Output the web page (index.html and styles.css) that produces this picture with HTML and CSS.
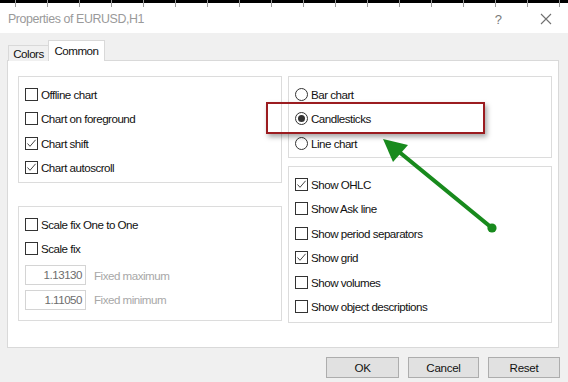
FILE: index.html
```html
<!DOCTYPE html>
<html>
<head>
<meta charset="utf-8">
<title>Properties of EURUSD,H1</title>
<link rel="stylesheet" href="styles.css">
</head>
<body>
<div class="window">
  <div class="topbar"></div>
  <div class="titlebar">
    <span class="title">Properties of EURUSD,H1</span>
    <div class="controls">
      <span class="help">?</span>
      <svg class="close" width="12" height="12" viewBox="0 0 12 12"><path d="M1 1L11 11M11 1L1 11" stroke="#707070" stroke-width="1.1" fill="none"/></svg>
    </div>
  </div>
  <div class="client">
    <div class="tabs">
      <div class="tab">Colors</div>
      <div class="tab active">Common</div>
    </div>
    <div class="panel">
      <div class="col">
        <div class="group g-left1">
          <div class="row"><span class="cb"></span><span>Offline chart</span></div>
          <div class="row"><span class="cb"></span><span>Chart on foreground</span></div>
          <div class="row"><span class="cb checked"><svg viewBox="0 0 11 11"><path d="M1.5 5.5L4 8.3L9.6 1.8" fill="none" stroke="#444" stroke-width="1"/></svg></span><span>Chart shift</span></div>
          <div class="row"><span class="cb checked"><svg viewBox="0 0 11 11"><path d="M1.5 5.5L4 8.3L9.6 1.8" fill="none" stroke="#444" stroke-width="1"/></svg></span><span>Chart autoscroll</span></div>
        </div>
        <div class="group g-left2">
          <div class="row"><span class="cb"></span><span>Scale fix One to One</span></div>
          <div class="row"><span class="cb"></span><span>Scale fix</span></div>
          <div class="row field-row first"><span class="field">1.13130</span><span class="field-label">Fixed maximum</span></div>
          <div class="row field-row"><span class="field">1.11050</span><span class="field-label">Fixed minimum</span></div>
        </div>
      </div>
      <div class="col">
        <div class="group g-right1">
          <div class="row"><span class="rb"></span><span>Bar chart</span></div>
          <div class="row"><span class="rb on"></span><span>Candlesticks</span></div>
          <div class="row"><span class="rb"></span><span>Line chart</span></div>
        </div>
        <div class="group g-right2">
          <div class="row"><span class="cb checked"><svg viewBox="0 0 11 11"><path d="M1.5 5.5L4 8.3L9.6 1.8" fill="none" stroke="#444" stroke-width="1"/></svg></span><span>Show OHLC</span></div>
          <div class="row"><span class="cb"></span><span>Show Ask line</span></div>
          <div class="row"><span class="cb"></span><span>Show period separators</span></div>
          <div class="row"><span class="cb checked"><svg viewBox="0 0 11 11"><path d="M1.5 5.5L4 8.3L9.6 1.8" fill="none" stroke="#444" stroke-width="1"/></svg></span><span>Show grid</span></div>
          <div class="row"><span class="cb"></span><span>Show volumes</span></div>
          <div class="row"><span class="cb"></span><span>Show object descriptions</span></div>
        </div>
      </div>
    </div>
    <div class="buttons">
      <button class="btn btn-ok">OK</button>
      <button class="btn btn-cancel">Cancel</button>
      <button class="btn btn-reset">Reset</button>
    </div>
  </div>
  <div class="highlight"></div>
  <svg class="arrow" width="568" height="382" viewBox="0 0 568 382">
    <line x1="492" y1="228" x2="398" y2="151" stroke="#188a1d" stroke-width="4.2" stroke-linecap="round"/>
    <polygon points="383,139 408,145 393,162" fill="#188a1d"/>
    <circle cx="492" cy="228" r="4.6" fill="#188a1d"/>
  </svg>
</div>
</body>
</html>
```

FILE: styles.css
```css
* { box-sizing: border-box; }

body {
  margin: 0;
  font-family: "Liberation Sans", Arial, sans-serif;
  font-size: 11.6px;
  color: #111;
}

.window {
  position: relative;
  width: 568px;
  height: 382px;
  overflow: hidden;
  background: #f0f0f0;
}

.topbar {
  position: relative;
  height: 3px;
  background: #000;
}

.topbar::after {
  content: "";
  position: absolute;
  left: 0;
  right: 0;
  top: 0;
  height: 7px;
  background: repeating-linear-gradient(to right, transparent 0 15px, #9a9a9a 15px 16px, transparent 16px 32px);
}

.titlebar {
  height: 30px;
  background: #fff;
  display: flex;
  align-items: center;
  padding-left: 8px;
}

.title {
  font-size: 12.4px;
  color: #9a9a9a;
  letter-spacing: -0.4px;
  padding-top: 2px;
}

.controls {
  margin-left: auto;
  display: flex;
  align-items: center;
  padding-right: 16px;
  padding-top: 2px;
}

.help {
  font-size: 13px;
  color: #7a7a7a;
  margin-right: 38px;
}

.close { display: block; }

.client {
  padding: 7px 0 0 7px;
}

.tabs {
  position: relative;
  z-index: 1;
  display: flex;
  align-items: flex-end;
  height: 21px;
  margin-left: 1px;
  margin-bottom: -1px;
}

.tab {
  height: 16px;
  width: 41px;
  border: 1px solid #d9d9d9;
  border-bottom: none;
  background: #f0f0f0;
  line-height: 15px;
  text-align: center;
  letter-spacing: -0.5px;
}

.tab.active {
  height: 21px;
  width: 57px;
  margin-left: -1px;
  background: #fff;
  line-height: 19px;
}

.panel {
  width: 552px;
  height: 288px;
  border: 1px solid #d9d9d9;
  background: #fff;
  display: flex;
  gap: 6px;
  padding: 15px 0 0 10px;
}

.col {
  width: 264px;
  display: flex;
  flex-direction: column;
}

.group {
  border: 1px solid #dcdcdc;
  padding: 5px 0 0 6px;
}

.g-left1 { height: 107px; }
.g-left2 { height: 115px; margin-top: 23px; }
.g-right1 { height: 82px; }
.g-right2 { height: 157px; margin-top: 8px; }

.row {
  height: 24.5px;
  display: flex;
  align-items: center;
  gap: 3px;
  letter-spacing: -0.5px;
  white-space: nowrap;
}

.cb {
  position: relative;
  width: 13px;
  height: 13px;
  flex: none;
  border: 1px solid #333;
  background: #fff;
}

.cb svg {
  position: absolute;
  left: 0;
  top: 0;
  width: 11px;
  height: 11px;
}

.rb {
  position: relative;
  width: 13px;
  height: 13px;
  flex: none;
  border: 1px solid #333;
  border-radius: 50%;
  background: #fff;
}

.rb.on::after {
  content: "";
  position: absolute;
  left: 2px;
  top: 2px;
  width: 7px;
  height: 7px;
  border-radius: 50%;
  background: #333;
}

.field-row.first { margin-top: 2px; }

.field {
  width: 61px;
  height: 20px;
  border: 1px solid #d4d4d4;
  text-align: right;
  padding-right: 3px;
  line-height: 18px;
  color: #6d6d6d;
}

.field-label {
  margin-left: 5px;
  color: #a8a8a8;
}

.buttons {
  display: flex;
  justify-content: flex-end;
  gap: 9px;
  padding: 9px 8px 0 0;
}

.btn {
  height: 21px;
  border: 1px solid #adadad;
  background: #e1e1e1;
  font-family: "Liberation Sans", Arial, sans-serif;
  font-size: 11.6px;
  color: #111;
  padding: 0;
  letter-spacing: -0.3px;
}

.btn-ok { width: 73px; }
.btn-cancel { width: 71px; }
.btn-reset { width: 72px; }

.highlight {
  position: absolute;
  left: 266px;
  top: 102px;
  width: 219px;
  height: 32px;
  border: 2px solid #9b1c20;
  box-shadow: 2px 3px 5px rgba(0, 0, 0, 0.35);
}

.arrow {
  position: absolute;
  left: 0;
  top: 0;
  pointer-events: none;
}
```
